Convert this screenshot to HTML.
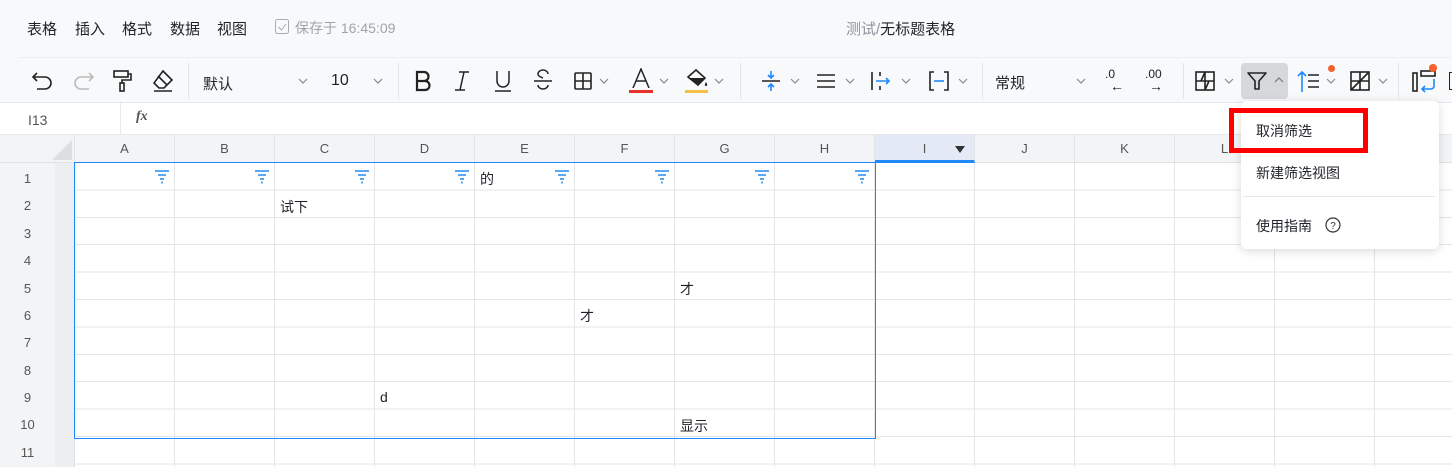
<!DOCTYPE html>
<html><head><meta charset="utf-8"><style>
*{margin:0;padding:0;box-sizing:border-box}
body{width:1452px;height:467px;overflow:hidden;background:#fff;font-family:"Liberation Sans","Noto Sans CJK SC",sans-serif;position:relative;color:#1f2329}
.a{position:absolute}
.t{font-size:15px;white-space:nowrap}
.chev{position:absolute;width:10px;height:6px}
.sep{position:absolute;top:63px;width:1px;height:36px;background:#e2e4e8}
.ch{position:absolute;top:135px;height:28px;width:100px;text-align:center;line-height:28px;font-size:13px;color:#555;border-right:1px solid #e2e4e8}
.rh{position:absolute;left:0;width:55px;text-align:center;font-size:13px;color:#555}
.f{position:absolute;top:170px}
.c{position:absolute;font-size:14px;color:#1f2329}
</style></head><body>
<div class="a" style="left:0;top:0;width:1452px;height:103px;background:#f8f9fb"></div>
<div class="a" style="left:18px;top:57px;width:1434px;height:1px;background:#eceef1"></div>
<div class="a" style="left:0;top:102px;width:1452px;height:1px;background:#e6e8eb"></div>
<div class="a t" style="left:27px;top:18px">表格</div>
<div class="a t" style="left:75px;top:18px">插入</div>
<div class="a t" style="left:122px;top:18px">格式</div>
<div class="a t" style="left:170px;top:18px">数据</div>
<div class="a t" style="left:217px;top:18px">视图</div>
<svg class="a" style="left:274px;top:18px" width="16" height="18"><rect x="1.5" y="1.5" width="13" height="14" rx="2" fill="none" stroke="#aaa"/><path d="M4.5 9l3 3 4.5-6" fill="none" stroke="#aaa"/></svg>
<div class="a t" style="left:295px;top:18px;color:#a0a3a8;font-size:14px">保存于 16:45:09</div>
<div class="a t" style="left:846px;top:18px"><span style="color:#8f959e">测试/</span>无标题表格</div>

<!-- toolbar -->
<svg class="a" style="left:30px;top:70px" width="24" height="22" fill="none" stroke="#222" stroke-width="1.6"><path d="M3 7h12a6 6 0 010 12H7"/><path d="M7 3L3 7l4 4"/></svg>
<svg class="a" style="left:72px;top:70px" width="24" height="22" fill="none" stroke="#bbb" stroke-width="1.6"><path d="M21 7H9a6 6 0 000 12h8"/><path d="M17 3l4 4-4 4"/></svg>
<svg class="a" style="left:111px;top:69px" width="24" height="24" fill="none" stroke="#222" stroke-width="1.6"><rect x="3" y="2" width="14" height="6"/><path d="M17 5h3v6h-9v3"/><rect x="9" y="14" width="4" height="8"/></svg>
<svg class="a" style="left:150px;top:69px" width="26" height="24" fill="none" stroke="#222" stroke-width="1.6"><path d="M13 2l9 9-8 8H9l-5-5z"/><path d="M8 7l9 9"/><path d="M4 22h18"/></svg>
<div class="sep" style="left:188px"></div>
<div class="a t" style="left:203px;top:73px">默认</div>
<svg class="chev" style="left:298px;top:78px"><path d="M1 1l4 4 4-4" fill="none" stroke="#888" stroke-width="1.2"/></svg>
<div class="a t" style="left:331px;top:72px;font-size:16px">10</div>
<svg class="chev" style="left:373px;top:78px"><path d="M1 1l4 4 4-4" fill="none" stroke="#888" stroke-width="1.2"/></svg>
<div class="sep" style="left:398px"></div>
<svg class="a" style="left:414px;top:70px" width="18" height="22" fill="none" stroke="#222" stroke-width="2.2"><path d="M3 2h7a4.5 4.5 0 010 9H3zM3 11h8a4.5 4.5 0 010 9H3z"/></svg>
<svg class="a" style="left:454px;top:70px" width="16" height="22" fill="none" stroke="#222" stroke-width="1.5"><path d="M5 2h10M1 20h10M10 2L6 20"/></svg>
<svg class="a" style="left:493px;top:69px" width="20" height="24" fill="none" stroke="#222" stroke-width="1.5"><path d="M4 2v10a6 6 0 0012 0V2M2 22h16"/></svg>
<svg class="a" style="left:533px;top:69px" width="20" height="24" fill="none" stroke="#222" stroke-width="1.5"><path d="M15 5a5 4 0 00-10 0c0 2 2 3 5 4M5 16a5 4 0 0010 0M1 12h18"/></svg>
<svg class="a" style="left:573px;top:71px" width="20" height="20" fill="none" stroke="#222" stroke-width="1.6"><rect x="2" y="2" width="16" height="16" rx="1"/><path d="M10 2v16M2 10h16"/></svg>
<svg class="chev" style="left:599px;top:78px"><path d="M1 1l4 4 4-4" fill="none" stroke="#888" stroke-width="1.2"/></svg>
<svg class="a" style="left:631px;top:68px" width="20" height="20" fill="none" stroke="#222" stroke-width="1.5"><path d="M2 20L10 1l8 19M5 13h10"/></svg>
<div class="a" style="left:629px;top:90px;width:24px;height:3px;background:#e8302a"></div>
<svg class="chev" style="left:659px;top:78px"><path d="M1 1l4 4 4-4" fill="none" stroke="#888" stroke-width="1.2"/></svg>
<svg class="a" style="left:684px;top:68px" width="26" height="22"><path d="M4 9l8-7 9 8-7 7z" fill="none" stroke="#222" stroke-width="1.6"/><path d="M4 10h17l-7 7z" fill="#222"/><path d="M22 14c-1.5 2.5-1.5 4 0 4s1.5-1.5 0-4z" fill="#222"/></svg>
<div class="a" style="left:685px;top:90px;width:23px;height:3px;background:#f5c144"></div>
<svg class="chev" style="left:714px;top:78px"><path d="M1 1l4 4 4-4" fill="none" stroke="#888" stroke-width="1.2"/></svg>
<div class="sep" style="left:740px"></div>
<svg class="a" style="left:760px;top:69px" width="22" height="24" fill="none" stroke-width="1.6"><path d="M2 12h18" stroke="#222"/><path d="M11 2v7M8 6l3 3 3-3M11 22v-7M8 18l3-3 3 3" stroke="#1e88ff"/></svg>
<svg class="chev" style="left:790px;top:78px"><path d="M1 1l4 4 4-4" fill="none" stroke="#888" stroke-width="1.2"/></svg>
<svg class="a" style="left:816px;top:71px" width="20" height="20" stroke="#222" stroke-width="1.6"><path d="M1 4h18M1 10h18M1 16h18"/></svg>
<svg class="chev" style="left:845px;top:78px"><path d="M1 1l4 4 4-4" fill="none" stroke="#888" stroke-width="1.2"/></svg>
<svg class="a" style="left:870px;top:70px" width="22" height="22" fill="none" stroke-width="1.6"><path d="M2 2v18" stroke="#222"/><path d="M10 2v4M10 16v4" stroke="#222"/><path d="M6 11h13M16 8l3 3-3 3" stroke="#1e88ff"/></svg>
<svg class="chev" style="left:901px;top:78px"><path d="M1 1l4 4 4-4" fill="none" stroke="#888" stroke-width="1.2"/></svg>
<svg class="a" style="left:928px;top:70px" width="22" height="22" fill="none" stroke-width="1.6"><path d="M6 2H2v18h4M16 2h4v18h-4" stroke="#222"/><path d="M6 11h10" stroke="#1e88ff"/></svg>
<svg class="chev" style="left:958px;top:78px"><path d="M1 1l4 4 4-4" fill="none" stroke="#888" stroke-width="1.2"/></svg>
<div class="sep" style="left:982px"></div>
<div class="a t" style="left:995px;top:72px">常规</div>
<svg class="chev" style="left:1076px;top:78px"><path d="M1 1l4 4 4-4" fill="none" stroke="#888" stroke-width="1.2"/></svg>
<div class="a" style="left:1105px;top:67px;font-size:12px;color:#222">.0</div>
<div class="a" style="left:1110px;top:78px;font-size:14px;color:#222">←</div>
<div class="a" style="left:1145px;top:67px;font-size:12px;color:#222">.00</div>
<div class="a" style="left:1149px;top:78px;font-size:14px;color:#222">→</div>
<div class="sep" style="left:1183px"></div>
<svg class="a" style="left:1195px;top:71px" width="20" height="20" fill="none" stroke="#222" stroke-width="1.6"><rect x="1" y="1" width="18" height="18"/><path d="M10 1v18M1 10h18M6 10l4-9M10 19l4-9"/></svg>
<svg class="chev" style="left:1224px;top:78px"><path d="M1 1l4 4 4-4" fill="none" stroke="#888" stroke-width="1.2"/></svg>
<div class="a" style="left:1241px;top:63px;width:47px;height:36px;background:#d6d8dc;border-radius:4px"></div>
<svg class="a" style="left:1246px;top:70px" width="22" height="22" fill="none" stroke="#222" stroke-width="1.6"><path d="M2 3h18l-7 8v8l-4 0v-8z" stroke-linejoin="round"/></svg>
<svg class="chev" style="left:1274px;top:77px"><path d="M1 5l4-4 4 4" fill="none" stroke="#777" stroke-width="1.2"/></svg>
<svg class="a" style="left:1297px;top:69px" width="26" height="24" fill="none" stroke-width="1.6"><path d="M5 23V3M1 7l4-4 4 4" stroke="#1e88ff"/><path d="M11 6h11M11 12h11M11 18h11" stroke="#222"/></svg>
<div class="a" style="left:1328px;top:65px;width:7px;height:7px;border-radius:50%;background:#f5622e"></div>
<svg class="chev" style="left:1326px;top:78px"><path d="M1 1l4 4 4-4" fill="none" stroke="#888" stroke-width="1.2"/></svg>
<svg class="a" style="left:1350px;top:71px" width="20" height="20" fill="none" stroke="#222" stroke-width="1.6"><rect x="1" y="1" width="18" height="18"/><path d="M10 1v18M1 10h18M1 19L19 1"/></svg>
<svg class="chev" style="left:1378px;top:78px"><path d="M1 1l4 4 4-4" fill="none" stroke="#888" stroke-width="1.2"/></svg>
<div class="sep" style="left:1398px"></div>
<svg class="a" style="left:1412px;top:69px" width="26" height="24" fill="none" stroke-width="1.6"><rect x="1" y="4" width="4" height="18" stroke="#222"/><rect x="9" y="2" width="14" height="5" stroke="#222"/><path d="M22 10v7a3 3 0 01-3 3h-9M13 17l-3 3 3 3" stroke="#1e88ff"/></svg>
<div class="a" style="left:1429px;top:64px;width:8px;height:8px;border-radius:50%;background:#f5622e"></div>
<div class="a" style="left:1449px;top:72px;width:3px;height:18px;border:1.5px solid #222;border-right:none"></div>

<!-- formula bar -->
<div class="a" style="left:120px;top:103px;width:1px;height:32px;background:#e6e8eb"></div>
<div class="a" style="left:28px;top:112px;font-size:14px;color:#555">I13</div>
<div class="a" style="left:136px;top:109px;font-size:14px;font-style:italic;font-weight:bold;color:#555;font-family:'Liberation Serif',serif">fx</div>
<div class="a" style="left:0;top:134px;width:1452px;height:1px;background:#e6e8eb"></div>

<!-- headers -->
<div class="a" style="left:0;top:135px;width:1452px;height:28px;background:#f3f4f6"></div>
<div class="a" style="left:0;top:163px;width:75px;height:304px;background:#f3f4f6"></div>
<div class="a" style="left:55px;top:163px;width:20px;height:304px;background:#eceef1"></div>
<svg class="a" style="left:50px;top:140px" width="22" height="20"><path d="M22 0v20H2z" fill="#dcdee2"/></svg>
<div class="a" style="left:74px;top:135px;width:1px;height:332px;background:#dfe1e5"></div>
<div class="a" style="left:0;top:162px;width:1452px;height:1px;background:#dfe1e5"></div>
<div class="ch" style="left:75px">A</div><div class="ch" style="left:175px">B</div><div class="ch" style="left:275px">C</div><div class="ch" style="left:375px">D</div><div class="ch" style="left:475px">E</div><div class="ch" style="left:575px">F</div><div class="ch" style="left:675px">G</div><div class="ch" style="left:775px">H</div>
<div class="ch" style="left:875px;background:#e3e9f5;border-bottom:3px solid #1e88ff;height:28px">I</div>
<svg class="a" style="left:955px;top:146px" width="10" height="7"><path d="M0 0h10L5 7z" fill="#333"/></svg>
<div class="ch" style="left:975px">J</div><div class="ch" style="left:1075px">K</div><div class="ch" style="left:1175px">L</div><div class="ch" style="left:1275px">M</div><div class="ch" style="left:1375px">N</div>

<!-- grid -->
<div class="a" style="left:75px;top:163px;width:1377px;height:304px;background-image:repeating-linear-gradient(to right,transparent 0 99px,#e3e5e8 99px 100px),repeating-linear-gradient(to bottom,transparent 0 26.4px,#e3e5e8 26.4px 27.4px)"></div>
<div class="rh" style="top:171px">1</div><div class="rh" style="top:198px">2</div><div class="rh" style="top:226px">3</div><div class="rh" style="top:253px">4</div><div class="rh" style="top:281px">5</div><div class="rh" style="top:308px">6</div><div class="rh" style="top:335px">7</div><div class="rh" style="top:363px">8</div><div class="rh" style="top:390px">9</div><div class="rh" style="top:417px">10</div><div class="rh" style="top:445px">11</div>
<div class="a" style="left:74px;top:162px;width:802px;height:277px;border:1.5px solid #1e88ff"></div>

<svg width="0" height="0" style="position:absolute"><defs><g id="fi"><path d="M0 1h14M3 5h8M5 9h4M6 12.5h2" stroke="#5aa8f5" stroke-width="2"/></g></defs></svg>
<svg class="f" style="left:155px" width="14" height="14"><use href="#fi"/></svg>
<svg class="f" style="left:255px" width="14" height="14"><use href="#fi"/></svg>
<svg class="f" style="left:355px" width="14" height="14"><use href="#fi"/></svg>
<svg class="f" style="left:455px" width="14" height="14"><use href="#fi"/></svg>
<svg class="f" style="left:555px" width="14" height="14"><use href="#fi"/></svg>
<svg class="f" style="left:655px" width="14" height="14"><use href="#fi"/></svg>
<svg class="f" style="left:755px" width="14" height="14"><use href="#fi"/></svg>
<svg class="f" style="left:855px" width="14" height="14"><use href="#fi"/></svg>

<div class="c" style="left:480px;top:169px">的</div>
<div class="c" style="left:280px;top:197px">试下</div>
<div class="c" style="left:680px;top:279px">才</div>
<div class="c" style="left:580px;top:306px">才</div>
<div class="c" style="left:380px;top:389px">d</div>
<div class="c" style="left:680px;top:416px">显示</div>

<!-- dropdown -->
<div class="a" style="left:1241px;top:101px;width:198px;height:148px;background:#fff;border-radius:6px;box-shadow:0 2px 10px rgba(0,0,0,.15)"></div>
<div class="a" style="left:1229px;top:108px;width:139px;height:45px;border:5px solid #f00"></div>
<div class="a t" style="left:1256px;top:121px;font-size:14px">取消筛选</div>
<div class="a t" style="left:1256px;top:163px;font-size:14px">新建筛选视图</div>
<div class="a" style="left:1243px;top:196px;width:192px;height:1px;background:#e6e8eb"></div>
<div class="a t" style="left:1256px;top:216px;font-size:14px">使用指南</div>
<svg class="a" style="left:1325px;top:217px" width="16" height="16"><circle cx="8" cy="8" r="7" fill="none" stroke="#333" stroke-width="1.2"/><text x="8" y="12" font-size="10" text-anchor="middle" fill="#333" font-family="Liberation Sans">?</text></svg>
</body></html>
